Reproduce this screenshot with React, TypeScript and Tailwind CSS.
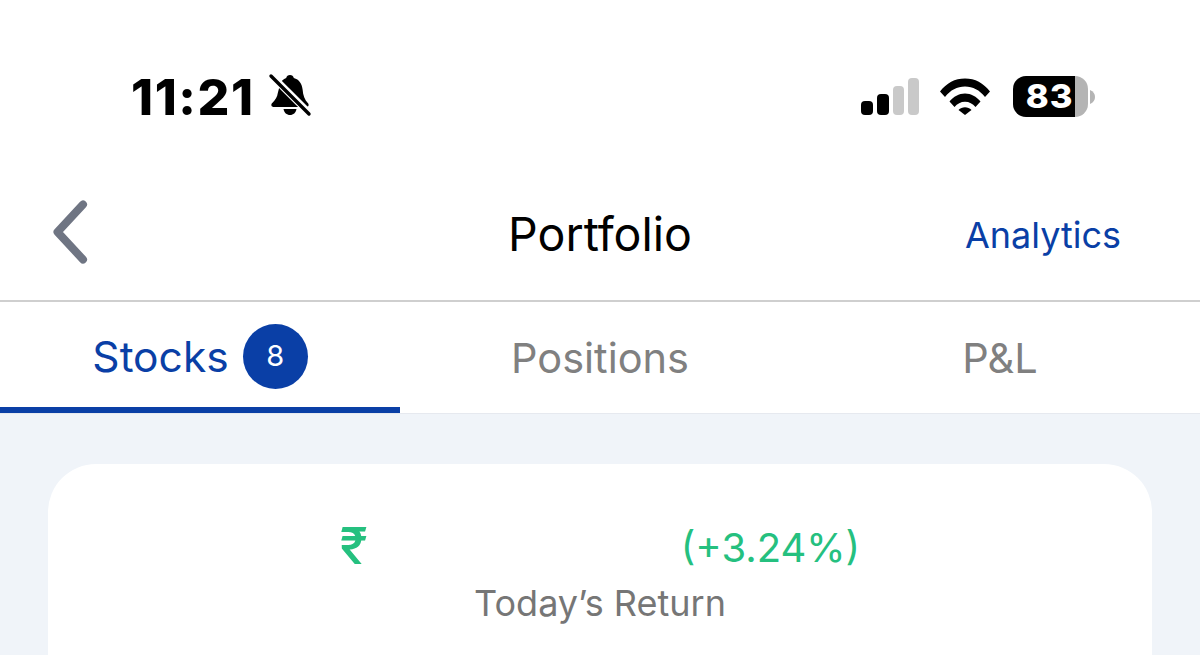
function MutedBell() {
  return (
    <svg width="44" height="46" viewBox="0 0 44 44" className="ml-[13px] -mt-[1px]">
      <path
        d="M22 1c2 0 3.400 1.300 3.800 3 5.400 1.400 8.200 5.800 8.800 11.500.5 6 2 10 5.400 13.800 1.300 1.400.5 3.700-1.500 3.700H5.500c-2 0-2.800-2.200-1.500-3.700 3.500-3.200 5.300-6.800 5.800-10.300L12 10.500C13.300 7 15.300 5 18.200 4 18.600 2.300 20 1 22 1z"
        fill="#000"
      />
      <path d="M15.500 35h13c-.6 3.800-3.200 6-6.500 6s-5.900-2.200-6.500-6z" fill="#000" />
      <path d="M1 -1 45 43" stroke="#fff" strokeWidth="7" />
      <path d="M3 2 41 40" stroke="#000" strokeWidth="3.400" strokeLinecap="round" />
    </svg>
  );
}

function Signal() {
  return (
    <div className="flex items-end gap-[4px] h-[37px]">
      <div className="w-[12px] h-[14px] rounded-[4px] bg-black" />
      <div className="w-[12px] h-[21px] rounded-[4px] bg-black" />
      <div className="w-[11px] h-[29px] rounded-[4px] bg-[#c9c9c9]" />
      <div className="w-[11px] h-[37px] rounded-[4px] bg-[#c9c9c9]" />
    </div>
  );
}

function Wifi() {
  return (
    <svg width="50" height="37" viewBox="0 0 50 37" className="ml-[21px]">
      <path d="M0 13.500C6.500 5 15 .5 25 .5s18.500 4.500 25 13l-5 5.500C39.500 12 33 8.500 25 8.500S10.500 12 5 19z" fill="#000" />
      <path d="M9.500 23.500C13.500 18.500 19 15.500 25 15.500s11.500 3 15.500 8l-5 5.500c-2.800-3.200-6.300-5.200-10.500-5.200s-7.700 2-10.500 5.200z" fill="#000" />
      <path d="M18.500 32c1.800-1.800 4-2.800 6.500-2.800s4.700 1 6.500 2.800L25 37z" fill="#000" />
    </svg>
  );
}

function Battery() {
  return (
    <div className="flex items-center ml-[23px]">
      <div className="flex w-[75px] h-[41px] rounded-[13px] overflow-hidden">
        <div className="w-[62px] bg-black flex items-center justify-end pr-[1px] text-white text-[33px] font-extrabold leading-none tracking-[1px]">
          <span className="inline-block scale-x-[1.05] origin-right">83</span>
        </div>
        <div className="flex-1 bg-[#b4b4b4]" />
      </div>
      <svg width="6" height="14" viewBox="0 0 6 14" className="ml-[2px]">
        <path d="M0 0c3.500 1.500 5 4 5 7s-1.500 5.500-5 7z" fill="#b4b4b4" />
      </svg>
    </div>
  );
}

function StatusBar() {
  return (
    <div className="h-[193px] flex items-center justify-between pl-[131px] pr-[104px]">
      <div className="flex items-center">
        <span className="text-[50px] font-extrabold leading-none tracking-[1.600px] text-black">11:21</span>
        <MutedBell />
      </div>
      <div className="flex items-center">
        <Signal />
        <Wifi />
        <Battery />
      </div>
    </div>
  );
}

function Header() {
  return (
    <div className="h-[109px] grid grid-cols-3 items-center border-b-2 border-[#cfcfcf] pb-[24px]">
      <div className="pl-[50px] -mt-[6px]">
        <svg width="40" height="66" viewBox="0 0 40 66" className="text-[#6f7583]">
          <path d="M33 5.500 7.500 33 33 60.500" fill="none" stroke="currentColor" strokeWidth="8" strokeLinecap="round" strokeLinejoin="round" />
        </svg>
      </div>
      <div className="text-center text-[46.500px] leading-none text-black">Portfolio</div>
      <div className="text-right pr-[79px] text-[36px] font-[430] leading-none text-[#0a3fa6]">Analytics</div>
    </div>
  );
}

function Tabs() {
  return (
    <div className="grid grid-cols-3 h-[112px] border-b border-[#e6e9ef]">
      <div className="flex items-center justify-center gap-[14px] border-b-[6px] border-[#0a3fa6] text-[#0a3fa6] pt-[3px]">
        <span className="mt-[3px] text-[42.500px] font-[430] leading-none">Stocks</span>
        <span className="w-[65px] h-[65px] rounded-full bg-[#0a3fa6] text-white text-[29px] flex items-center justify-center">
          8
        </span>
      </div>
      <div className="flex items-center justify-center text-[41.500px] leading-none text-[#808080] pt-[2px]">Positions</div>
      <div className="flex items-center justify-center text-[41.500px] leading-none text-[#808080] pt-[2px]">P&amp;L</div>
    </div>
  );
}

function ReturnCard() {
  return (
    <div className="mx-[48px] mt-[50px] h-[400px] rounded-[48px] bg-white pt-[58px]">
      <div className="flex items-center justify-center h-[52px]">
        <span className="w-[29px] -mt-[6px] text-[51px] leading-none font-medium text-[#25c07f]">₹</span>
        <span className="w-[312px]" />
        <span className="text-[40px] leading-none text-[#25c07f]">(+3.24%)</span>
      </div>
      <div className="mt-[11px] text-center text-[36px] font-[430] leading-none text-[#767676]">Today’s Return</div>
    </div>
  );
}

export default function App() {
  return (
    <div className="w-[1200px] h-[655px] overflow-hidden bg-white font-['Inter','Noto_Sans',sans-serif]">
      <StatusBar />
      <Header />
      <Tabs />
      <div className="h-[400px] bg-[#f0f4f9] flow-root">
        <ReturnCard />
      </div>
    </div>
  );
}
